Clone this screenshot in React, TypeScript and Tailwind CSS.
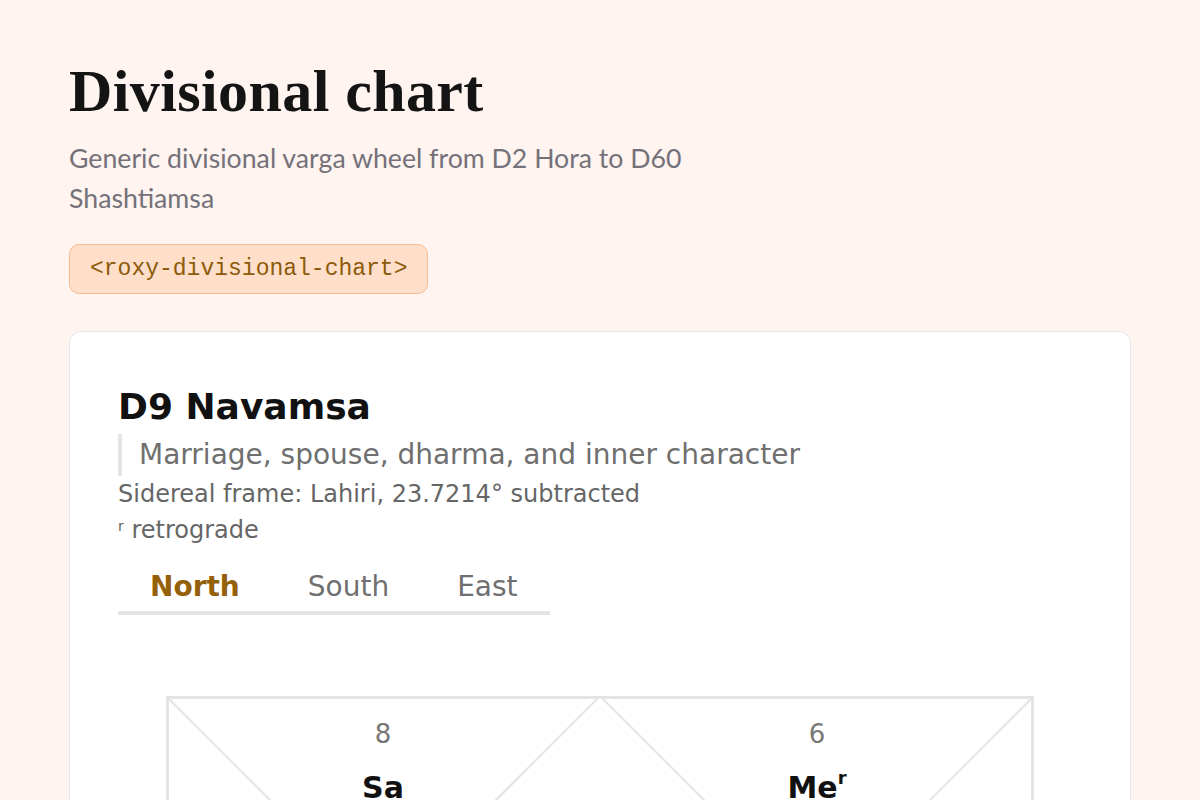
import React, { useState } from "react";

type House = { sign: number; planets: string[]; nx: number; ny: number };

// North Indian chart, 868 units square; label anchors per house
const houses: House[] = [
  { sign: 7, planets: [], nx: 434, ny: 262 },
  { sign: 8, planets: ["Sa"], nx: 217, ny: 38 },
  { sign: 9, planets: [], nx: 40, ny: 217 },
  { sign: 10, planets: [], nx: 217, ny: 434 },
  { sign: 11, planets: [], nx: 40, ny: 651 },
  { sign: 12, planets: [], nx: 217, ny: 828 },
  { sign: 1, planets: [], nx: 434, ny: 606 },
  { sign: 2, planets: [], nx: 651, ny: 828 },
  { sign: 3, planets: [], nx: 828, ny: 651 },
  { sign: 4, planets: [], nx: 651, ny: 434 },
  { sign: 5, planets: [], nx: 828, ny: 217 },
  { sign: 6, planets: ["Me"], nx: 651, ny: 38 },
];

const retro = new Set(["Me"]);

const NorthChart: React.FC = () => (
  <svg
    viewBox="0 0 868 868"
    className="w-[868px] h-[868px] block"
    style={{ fontFamily: '"DejaVu Sans", sans-serif' }}
  >
    <rect x="1.5" y="1.5" width="865" height="865" fill="none" stroke="#e4e4e4" strokeWidth="3" />
    <line x1="0" y1="0" x2="868" y2="868" stroke="#e4e4e4" strokeWidth="2" />
    <line x1="868" y1="0" x2="0" y2="868" stroke="#e4e4e4" strokeWidth="2" />
    <polygon points="434,0 868,434 434,868 0,434" fill="none" stroke="#e4e4e4" strokeWidth="2" />
    {houses.map((h, i) => (
      <g key={i}>
        <text x={h.nx} y={h.ny} fontSize="26" fill="#777" textAnchor="middle" dominantBaseline="central">
          {h.sign}
        </text>
        {h.planets.map((p, j) => (
          <text
            key={p}
            x={h.nx}
            y={h.ny + 53 + j * 36}
            fontSize="30"
            fontWeight="bold"
            fill="#111"
            textAnchor="middle"
            dominantBaseline="central"
          >
            {p}
            {retro.has(p) && (
              <tspan fontSize="18" dy="-10">
                r
              </tspan>
            )}
          </text>
        ))}
      </g>
    ))}
  </svg>
);

export default function App() {
  const [tab, setTab] = useState("North");
  const tabs = ["North", "South", "East"];

  return (
    <div className="min-h-screen bg-[#fff4ef] px-[69px] pt-[55px]">
      <h1 className="text-[60px] leading-[72px] font-bold text-[#141414] tracking-[0.4px] font-['Liberation_Serif',serif]">
        Divisional chart
      </h1>
      <p className="mt-[11px] max-w-[640px] text-[26.7px] leading-[40px] text-[#75717a] font-['Lato',sans-serif]">
        Generic divisional varga wheel from D2 Hora to D60 Shashtiamsa
      </p>
      <div className="mt-[26px] inline-flex items-center h-[50px] px-[20px] rounded-[10px] bg-[#ffdfca] border border-[#f6bb90] font-['Liberation_Mono',monospace] text-[23px] text-[#8c5a08]">
        &lt;roxy-divisional-chart&gt;
      </div>

      <section className="mt-[37px] bg-white rounded-[12px] border border-[#ebe6e3] px-[48px] pt-[53px] pb-[60px] font-['DejaVu_Sans',sans-serif]">
        <h2 className="text-[36px] leading-[1.2] font-bold text-[#111]">D9 Navamsa</h2>
        <blockquote className="mt-[6px] border-l-[4px] border-[#e4e4e4] pl-[17px] text-[28px] leading-[42px] text-[#6f6f6f]">
          Marriage, spouse, dharma, and inner character
        </blockquote>
        <p className="text-[24px] leading-[36px] text-[#666]">
          Sidereal frame: Lahiri, 23.7214° subtracted
        </p>
        <p className="text-[24px] leading-[36px] text-[#666]">
          <sup className="text-[14px]">r</sup> retrograde
        </p>

        <div className="mt-[22px] flex gap-[4px] w-fit border-b-[4px] border-[#e4e4e4]">
          {tabs.map((t) => (
            <button
              key={t}
              onClick={() => setTab(t)}
              className={`px-[32px] pb-[7px] text-[28px] leading-[34px] ${
                tab === t ? "font-bold text-[#94600a]" : "text-[#6f6f6f]"
              }`}
            >
              {t}
            </button>
          ))}
        </div>

        <div className="mt-[81px] flex justify-center">
          <NorthChart />
        </div>
      </section>
    </div>
  );
}
